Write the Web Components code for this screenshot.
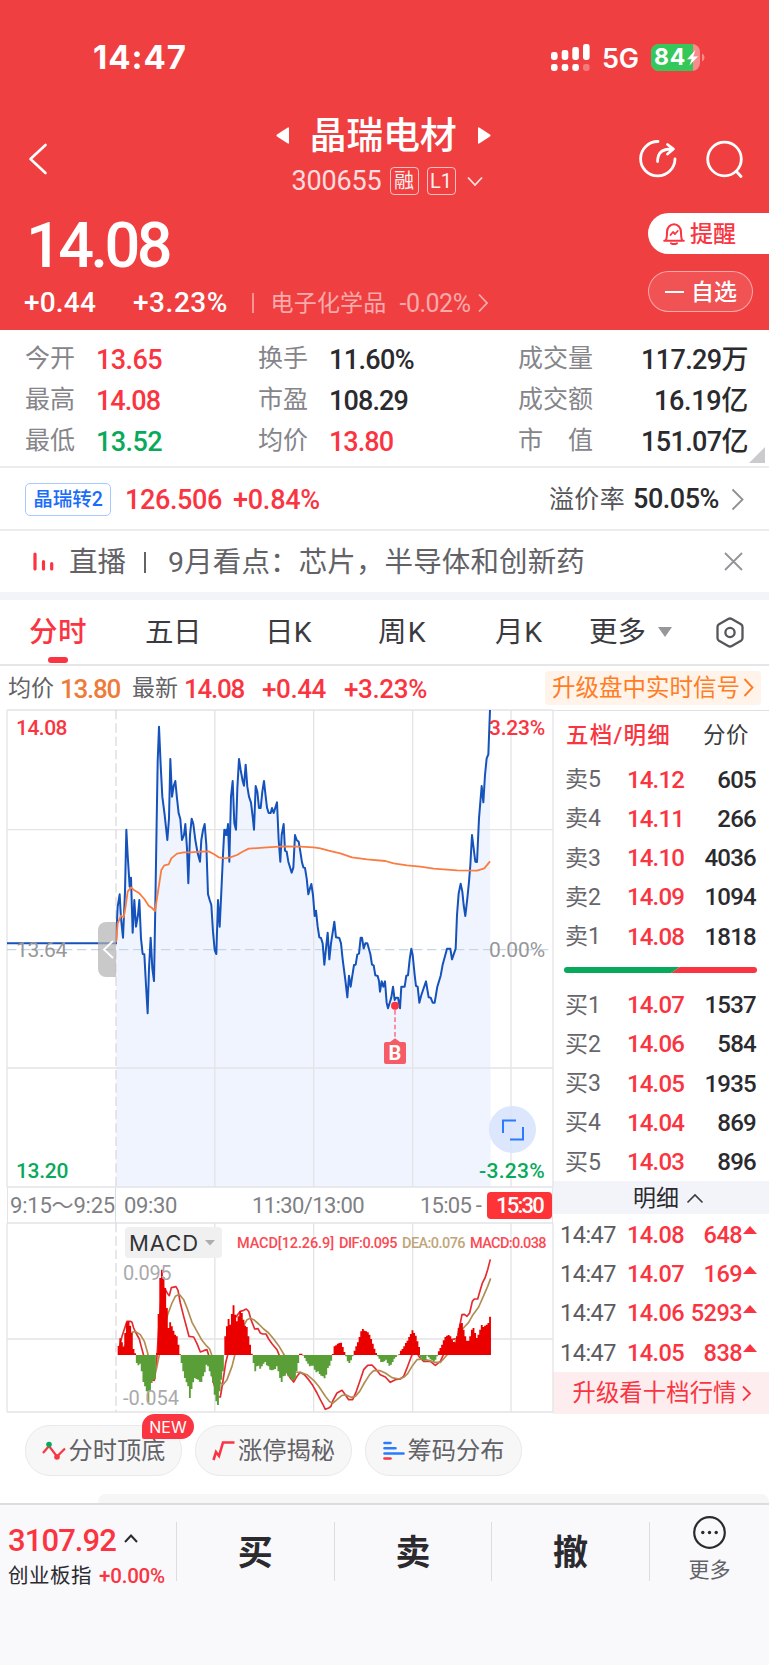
<!DOCTYPE html>
<html lang="zh-CN">
<head>
<meta charset="utf-8">
<meta name="viewport" content="width=device-width, initial-scale=1">
<title>晶瑞电材 300655</title>
<style>
	html, body {
		margin: 0;
		padding: 0;
	}
	body {
		width: 769px;
		height: 1665px;
		overflow: hidden;
		background: #fff;
		font-family: Roboto, "Noto Sans CJK SC", sans-serif;
		line-height: 1;
		color: #2b2b2f;
		--red: #fa3541;
		--green: #09a95c;
		--head: #f03f41;
		--line: #e6e6e8;
		--grey: #85858a;
	}
</style>
</head>
<body>
<stock-app></stock-app>

<script>
class BaseElement extends HTMLElement {
	constructor() {
		super();
		this.attachShadow({ mode: 'open' });
	}

	connectedCallback() {
		this.shadowRoot.innerHTML = `
			<style>
				* { box-sizing: border-box; }
				:host { display: flex; box-sizing: border-box; white-space: nowrap; }
				svg { display: block; flex: none; overflow: visible; }
				${this.css()}
			</style>
			${this.html()}
		`;
	}

	css() { return ''; }
	html() { return ''; }
}

// text that is tracked in or out until it fills the width in its "w" attribute
class FitText extends HTMLElement {
	constructor() {
		super();
		this.attachShadow({ mode: 'open' });
		this.shadowRoot.innerHTML = '<style>:host { display: block; flex: none; white-space: nowrap; } span { display: inline-block; vertical-align: top; }</style><span><slot></slot></span>';
	}

	connectedCallback() {
		const span = this.shadowRoot.querySelector('span');
		const width = Number(this.getAttribute('w'));
		if (!width) return;
		const count = this.textContent.length;
		const natural = span.getBoundingClientRect().width;
		span.style.letterSpacing = (width - natural) / count + 'px';
		this.style.width = width + 'px';
		this.style.boxSizing = 'content-box';
	}
}

class StatusBar extends BaseElement {
	css() {
		return `
			:host { height: 110px; padding: 5px 65px 0 93px; align-items: center; color: #fff; font-family: Inter, sans-serif; }
			.time { font-size: 33px; font-weight: 700; }
			.signal { margin-left: auto; }
			.net { font-size: 27px; font-weight: 600; margin: 1px 12px 0 12px; }
			.battery { position: relative; width: 53px; height: 27px; display: flex; align-items: center; }
			.battery svg { position: absolute; inset: 0; }
			.battery fit-text { position: relative; font-size: 23px; font-weight: 700; padding-left: 3px; }
		`;
	}
	html() {
		const bars = [[0, 8], [10.7, 10], [21.3, 13], [32, 16]].map(([x, h], i) => `
			<rect x="${x}" y="${16 - h}" width="6.6" height="${h}" rx="2.4"/>
			<rect x="${x}" y="20" width="6.6" height="7" rx="2.4" opacity="${i == 3 ? .3 : 1}"/>`).join('');
		return `
			<fit-text class="time" w="94">14:47</fit-text>
			<svg class="signal" width="39" height="27" fill="#fff">${bars}</svg>
			<fit-text class="net" w="37">5G</fit-text>
			<div class="battery">
				<svg width="53" height="27">
					<rect width="49" height="27" rx="8" fill="#f78c8d"/>
					<path d="M8 0H42V27H8A8 8 0 0 1 0 19V8A8 8 0 0 1 8 0Z" fill="#34c759"/>
					<path d="M51 9.5q2.5 1 2.5 4t-2.5 4z" fill="#f78c8d"/>
					<path d="M44.5 6L36 15.2h4.6L38.4 21.5L47 12.5h-4.8z" fill="#fff"/>
				</svg>
				<fit-text w="32">84</fit-text>
			</div>
		`;
	}
}

class StockTitle extends BaseElement {
	css() {
		return `
			:host { height: 95px; padding: 0 25px 0 29px; color: #fff; justify-content: space-between; }
			.back { margin-top: 34px; }
			.mid { display: flex; flex-direction: column; align-items: center; margin-left: 80px; }
			.name { display: flex; align-items: center; height: 50px; gap: 21px; font-size: 37px; font-weight: 500; }
			.name fit-text { margin-top: 2px; }
			.code { display: flex; align-items: center; height: 38px; margin-top: 2px; font-size: 27px; margin-left: 8px; }
			.code fit-text:first-child { opacity: .82; }
			.box { width: 29px; height: 28px; border: 1.5px solid rgba(255,255,255,.72); border-radius: 4px; font-size: 20px;
				display: flex; align-items: center; justify-content: center; margin-left: 8px; opacity: .92; }
			.code svg { margin-left: 11px; }
			.tools { display: flex; gap: 29px; margin-top: 30px; }
		`;
	}
	html() {
		return `
			<svg class="back" width="18" height="30" fill="none" stroke="#fff" stroke-width="2.6" stroke-linecap="round" stroke-linejoin="round"><path d="M16.5 1L1.5 15l15 14"/></svg>
			<div class="mid">
				<div class="name">
					<svg width="13" height="17" fill="#fff"><path d="M13 1.5v14q0 2-1.6 .8L1 9.6q-1.3-1.1 0-2.2L11.4 .7Q13-.5 13 1.5z"/></svg>
					<fit-text w="147">晶瑞电材</fit-text>
					<svg width="13" height="17" fill="#fff"><path d="M0 1.5v14q0 2 1.6 .8L12 9.6q1.3-1.1 0-2.2L1.6 .7Q0-.5 0 1.5z"/></svg>
				</div>
				<div class="code">
					<fit-text w="90">300655</fit-text>
					<span class="box">融</span><span class="box">L1</span>
					<svg width="16" height="9" fill="none" stroke="#fff" stroke-width="1.8" opacity=".85"><path d="M1 .5l7 7.5l7-7.5"/></svg>
				</div>
			</div>
			<div class="tools">
				<svg width="38" height="38" viewBox="0 0 38 38" fill="none" stroke="#fff" stroke-width="2.8" stroke-linecap="round" stroke-linejoin="round">
					<path d="M19 1.5A17.2 17.2 0 1 0 36 19"/><path d="M18.6 21.5c0-9 4.5-12.5 14-12.5M28.5 4.5l6 4.5l-6 5"/>
				</svg>
				<svg width="38" height="38" viewBox="0 0 38 38" fill="none" stroke="#fff" stroke-width="2.8" stroke-linecap="round"><circle cx="18.5" cy="19" r="16.8"/><path d="M30.5 31.5l4.5 5"/></svg>
			</div>
		`;
	}
}

class PricePanel extends BaseElement {
	css() {
		return `
			:host { height: 125px; color: #fff; justify-content: space-between; }
			.left { padding-left: 24px; }
			.price { font-size: 63px; font-weight: 500; height: 69px; padding: 9px 0 0 2px; }
			.change { display: flex; align-items: center; height: 40px; font-size: 28px; font-weight: 500; }
			.sep { width: 1.5px; height: 20px; background: rgba(255,255,255,.45); margin: 0 17px 0 24px; }
			.sector { color: rgba(255,255,255,.56); font-weight: 400; display: flex; align-items: center; font-size: 23px; }
			.right { display: flex; flex-direction: column; width: 121px; padding-top: 8px; gap: 17px; font-size: 23px; font-weight: 500; }
			.right fit-text { margin-top: 2px; }
			.remind, .fav { height: 41px; display: flex; align-items: center; }
			.remind { background: #fff; color: var(--red); border-radius: 21px 0 0 21px; padding-left: 15px; gap: 5px; }
			.fav { width: 105px; border: 1px solid rgba(255,255,255,.5); background: rgba(255,255,255,.1); border-radius: 21px; padding-left: 16px; gap: 7px; }
		`;
	}
	html() {
		return `
			<div class="left">
				<fit-text class="price" w="143">14.08</fit-text>
				<div class="change">
					<fit-text w="72">+0.44</fit-text>
					<fit-text w="95" style="margin-left:37px">+3.23%</fit-text>
					<span class="sep"></span>
					<div class="sector">
						<fit-text w="116">电子化学品</fit-text>
						<fit-text w="71" style="margin-left:13px;font-size:25px">-0.02%</fit-text>
						<svg width="10" height="18" style="margin-left:7px" fill="none" stroke="currentColor" stroke-width="1.8"><path d="M1 .5L9 9l-8 8.5"/></svg>
					</div>
				</div>
			</div>
			<div class="right">
				<div class="remind">
					<svg width="22" height="23" viewBox="0 0 22 23" fill="none" stroke="#fa3541" stroke-width="2" stroke-linejoin="round" stroke-linecap="round">
						<path d="M1.2 18.7h19.6M2.8 18.5c1.2-2.5 1.2-4 1.2-8.5a7 7.8 0 0 1 14 0c0 4.5 0 6 1.2 8.5M8 21.3q3 1.5 6 0"/><path d="M7.5 13l2.5-3l2 2l2.7-3" stroke-width="1.8"/>
					</svg>
					<fit-text w="46">提醒</fit-text>
				</div>
				<div class="fav">
					<svg width="19" height="2" fill="#fff"><rect width="19" height="2"/></svg>
					<fit-text w="46">自选</fit-text>
				</div>
			</div>
		`;
	}
}

class QuoteStats extends BaseElement {
	css() {
		return `
			:host { position: relative; height: 138px; padding: 8px 21px 0 25px; border-bottom: 2px solid #ececee; flex-direction: column; }
			.row { display: grid; grid-template-columns: 71px 162px 71px 189px 80px 1fr; height: 41px; align-items: center; font-size: 27px; font-weight: 500; }
			.row > * { margin-top: 3px; }
			i { font-style: normal; font-weight: 400; font-size: 25px; color: var(--grey); margin-top: 0 !important; white-space: pre; }
			.end { justify-self: end; }
			.red { color: var(--red); }
			.green { color: var(--green); }
			.corner { position: absolute; right: 4px; bottom: 3px; }
		`;
	}
	html() {
		return `
			<div class="row"><i>今开</i><fit-text class="red" w="66">13.65</fit-text><i>换手</i><fit-text w="85">11.60%</fit-text><i>成交量</i><fit-text class="end" w="107">117.29万</fit-text></div>
			<div class="row"><i>最高</i><fit-text class="red" w="64">14.08</fit-text><i>市盈</i><fit-text w="79">108.29</fit-text><i>成交额</i><fit-text class="end" w="94">16.19亿</fit-text></div>
			<div class="row"><i>最低</i><fit-text class="green" w="66">13.52</fit-text><i>均价</i><fit-text class="red" w="64">13.80</fit-text><i>市　值</i><fit-text class="end" w="107">151.07亿</fit-text></div>
			<svg class="corner" width="16" height="16" fill="#cbcbcd"><path d="M16 0v16H0z"/></svg>
		`;
	}
}

class BondRow extends BaseElement {
	css() {
		return `
			:host { height: 63px; padding: 1px 25px 0; border-bottom: 2px solid #ececee; align-items: center; font-size: 27px; font-weight: 500; color: var(--red); }
			.tag { width: 86px; height: 33px; border: 1.5px solid #a9c8ff; border-radius: 5px; color: #1a6dfb; font-size: 19.5px; display: flex; align-items: center; justify-content: center; margin-right: 14px; padding-top: 1px; }
			.label { color: #55555a; font-weight: 400; font-size: 25px; margin-left: auto; }
			.val { color: #2b2b2f; margin: 0 12px 0 8px; }
		`;
	}
	html() {
		return `
			<span class="tag">晶瑞转2</span>
			<fit-text w="97" style="margin-top:2px">126.506</fit-text>
			<fit-text w="87" style="margin:2px 0 0 11px">+0.84%</fit-text>
			<fit-text class="label" w="76">溢价率</fit-text>
			<fit-text class="val" w="86">50.05%</fit-text>
			<svg width="13" height="21" fill="none" stroke="#919196" stroke-width="1.9"><path d="M1.5 .5L11.5 10.5l-10 10"/></svg>
		`;
	}
}

class NewsRow extends BaseElement {
	css() {
		return `
			:host { height: 69px; padding: 0 27px 0 33px; border-bottom: 8px solid #f2f4f9; align-items: center; font-size: 28.5px; color: #626267; }
			fit-text { margin-top: 4px; }
			fit-text:last-of-type { margin-right: auto; }
			.bar { width: 2px; height: 21px; background: #626267; margin: 2px 22px 0 18px; overflow: hidden; color: transparent; }
		`;
	}
	html() {
		return `
			<svg width="21" height="19" style="margin-right:15px" fill="none" stroke="#fa3541" stroke-width="3.2" stroke-linecap="round"><path d="M2 2v15M10.5 9.5v7.5M18.7 11.5v5.5"/></svg>
			<fit-text w="57">直播</fit-text><span class="bar"></span><fit-text w="417">9月看点：芯片，半导体和创新药</fit-text>
			<svg width="17" height="17" fill="none" stroke="#939398" stroke-width="1.8"><path d="M0 0l17 17M17 0L0 17"/></svg>
		`;
	}
}

class PeriodTabs extends BaseElement {
	css() {
		return `
			:host { height: 66px; padding: 0 25px 0 29px; border-bottom: 2px solid var(--line); align-items: center; font-size: 28.5px; color: #3b3b3f; }
			fit-text { margin-top: 3px; }
			.on { position: relative; color: var(--red); font-weight: 500; }
			.on::after { content: ""; position: absolute; width: 20px; height: 6px; border-radius: 3px; background: var(--red); left: 19px; top: 38px; }
			.more { display: flex; align-items: center; gap: 12px; margin: 0 auto 0 46px; }
		`;
	}
	html() {
		return `
			<fit-text class="on" w="58">分时</fit-text>
			<fit-text w="56" style="margin-left:58px">五日</fit-text>
			<fit-text w="47" style="margin-left:64px">日K</fit-text>
			<fit-text w="49" style="margin-left:66px">周K</fit-text>
			<fit-text w="48" style="margin-left:68px">月K</fit-text>
			<span class="more"><fit-text w="57">更多</fit-text><svg width="14" height="10" fill="#97979a"><path d="M0 0h14L7 10z"/></svg></span>
			<svg width="28" height="31" viewBox="0 0 28 31" fill="none" stroke="#56565b" stroke-width="2.3" stroke-linejoin="round"><path d="M12.2 2q1.8-1 3.6 0L25 7.2q1.5 1 1.5 2.8v11q0 1.8-1.5 2.8L15.8 29q-1.8 1-3.6 0L3 23.8Q1.5 22.8 1.5 21V10q0-1.8 1.5-2.8z"/><circle cx="14" cy="15.5" r="4.6"/></svg>
		`;
	}
}

class AverageRow extends BaseElement {
	css() {
		return `
			:host { height: 43px; padding: 0 8px 0 8px; align-items: center; font-size: 26px; font-weight: 500; color: var(--red); }
			.l { font-size: 23px; font-weight: 400; color: #626267; margin-top: 1px; }
			.up { margin-left: auto; width: 216px; height: 34px; border-radius: 4px; background: #fff3ea; color: #ff7d24; font-size: 23.5px; font-weight: 400;
				display: flex; align-items: center; justify-content: center; gap: 3px; }
			.up fit-text { margin-top: 2px; }
		`;
	}
	html() {
		return `
			<fit-text class="l" w="46">均价</fit-text>
			<fit-text w="60" style="margin:2px 0 0 6px;color:#ee7b3a">13.80</fit-text>
			<fit-text class="l" w="46" style="margin-left:12px">最新</fit-text>
			<fit-text w="60" style="margin:2px 0 0 6px">14.08</fit-text>
			<fit-text w="64" style="margin:2px 0 0 18px">+0.44</fit-text>
			<fit-text w="83" style="margin:2px 0 0 18px">+3.23%</fit-text>
			<span class="up"><fit-text w="188">升级盘中实时信号</fit-text><svg width="11" height="19" fill="none" stroke="#ff7d24" stroke-width="1.9"><path d="M1.5 1l8 8.5l-8 8.5"/></svg></span>
		`;
	}
}

// price and average curves, in thirds of a pixel
const PRICE = `20,715 347,715 352,605 358,568 362,640 368,698 374,560 378,374 382,450 388,545 392,518 397,683 402,585 407,665 413,630 417,585 422,700 427,747 432,748 437,840 442,925 446,790 451,698 456,790 461,828
	465,600 469,350 472,170 476,65 481,180 486,275 493,330 501,405 506,340 510,162 515,275 520,243 525,228 530,280 535,325 540,342 545,405 551,390 555,357 560,430 564,535 569,390 574,341 579,357 585,405
	592,445 599,470 603,405 608,375 613,357 618,420 623,568 628,585 633,600 638,680 643,735 648,747 653,585 658,665 663,560 668,450 672,374 675,390 678,374 680,390 683,357 687,470 692,275 697,228 702,355
	707,374 711,250 716,162 721,195 727,228 731,242 736,179 741,245 746,275 752,293 757,335 761,374 766,243 771,260 776,309 781,309 786,260 791,228 795,265 800,308 805,324 811,324 815,309 820,324 830,292
	835,405 840,470 844,390 850,357 854,437 859,440 864,470 874,503 879,488 884,390 889,405 895,410 900,440 905,472 909,487 914,489 919,520 924,568 929,550 933,537 938,570 943,633 947,617 952,665 957,697
	962,699 967,715 972,779 977,730 982,683 987,763 992,715 1002,650 1007,697 1017,699 1022,715 1027,763 1035,825 1041,877 1046,812 1051,845 1056,812 1061,780 1066,779 1071,748 1076,746 1081,698 1085,698
	1090,730 1095,715 1101,715 1110,747 1115,779 1120,781 1125,811 1132,813 1136,828 1139,860 1144,829 1149,845 1154,829 1159,893 1163,910 1169,890 1173,877 1178,845 1183,885 1187,878 1193,878 1199,910
	1203,845 1213,845 1218,812 1223,811 1228,763 1233,731 1237,750 1243,810 1247,843 1252,845 1257,893 1263,870 1277,829 1285,877 1291,878 1297,893 1303,893 1311,845 1321,812 1327,779 1340,731 1350,731
	1355,763 1366,731 1370,630 1375,565 1381,536 1386,560 1390,600 1395,633 1401,580 1406,530 1410,480 1415,390 1420,430 1425,470 1430,471 1436,340 1444,243 1449,292 1454,210 1459,160 1464,148 1469,15`;
const AVERAGE = `347,712 352,655 362,632 370,637 375,610 382,560 392,547 402,556 417,565 432,582 445,602 455,609 464,618 473,560 483,495 492,481 505,478 513,460 530,446 550,442 570,442 600,440 625,439 640,447
	655,457 675,460 690,457 710,450 725,441 745,431 800,427 850,424 900,425 940,427 960,430 985,437 1020,445 1055,457 1100,463 1155,468 1180,475 1220,481 1260,485 1300,491 1370,496 1430,497 1452,490 1469,469`;

class TrendChart extends BaseElement {
	css() {
		return `
			:host { position: relative; height: 477px; margin-left: 7px; width: 546px; font-size: 21px; font-weight: 500; }
			.lab { position: absolute; }
			.fold { position: absolute; left: 91px; top: 212px; width: 18px; height: 55px; border-radius: 8px 0 0 8px; background: rgba(178,178,178,.7); display: flex; align-items: center; justify-content: center; }
			.zoom { position: absolute; left: 482px; top: 396px; width: 47px; height: 47px; border-radius: 50%; background: rgba(214,227,253,.85); display: flex; align-items: center; justify-content: center; }
			.mark { position: absolute; left: 377px; top: 332px; width: 22px; height: 22px; border-radius: 2px; background: #f65c66; color: #fff; font: 700 20px/22px Roboto, sans-serif; text-align: center; }
		`;
	}
	html() {
		return `
			<svg width="546" height="477" viewBox="20 15 1638 1431" fill="none" stroke-linejoin="round">
				<path d="${'M347,715 L' + PRICE.replace('20,715 ', '') + ' 1471,1446 347,1446Z'}" fill="#eff4fe"/>
				<path d="M20 15H1658M20 374H1658M20 1089H1658M20 1446H1658M20 15V1446M1658 15V1446M643.5 15V1446M940 15V1446M1237 15V1446M1532 15V1446" stroke="#e4e4e7" stroke-width="4"/>
				<path d="M347 15V1446" stroke="#dcdce0" stroke-width="4" stroke-dasharray="28 12"/>
				<path d="M20 734H1650" stroke="#c5d6e4" stroke-width="4" stroke-dasharray="28 14"/>
				<polyline points="${PRICE}" stroke="#1552bb" stroke-width="6"/>
				<polyline points="${AVERAGE}" stroke="#fb7c41" stroke-width="5.4"/>
				<path d="M1184 915V1000" stroke="#f8626c" stroke-width="4" stroke-dasharray="14 8"/>
				<circle cx="1184" cy="902" r="12" fill="#fa3541"/>
				<path d="M1168 1012l16-12l16 12z" fill="#f65c66"/>
			</svg>
			<span class="mark">B</span>
			<fit-text class="lab" w="51" style="left:9px;top:8px;color:var(--red)">14.08</fit-text>
			<fit-text class="lab" w="56" style="right:8px;top:8px;color:var(--red)">3.23%</fit-text>
			<fit-text class="lab" w="51" style="left:9px;top:230px;color:#97979a;font-weight:400">13.64</fit-text>
			<fit-text class="lab" w="56" style="right:8px;top:230px;color:#97979a;font-weight:400">0.00%</fit-text>
			<fit-text class="lab" w="52" style="left:9px;top:451px;color:var(--green)">13.20</fit-text>
			<fit-text class="lab" w="66" style="right:8px;top:451px;color:var(--green)">-3.23%</fit-text>
			<span class="fold"><svg width="11" height="17" style="margin-left:2px" fill="none" stroke="#fff" stroke-width="1.8"><path d="M10 0L1 8.5l9 8.5"/></svg></span>
			<span class="zoom"><svg width="22" height="22" fill="none" stroke="#2a7bfd" stroke-width="2"><path d="M1 14V1.5H14M21 8V20.5H8"/></svg></span>
		`;
	}
}

class TimeAxis extends BaseElement {
	css() {
		return `
			:host { height: 36px; margin-left: 7px; width: 546px; align-items: center; border: solid #e4e4e7; border-width: 0 1px; font-size: 22px; color: #808084; padding-left: 2px; }
			fit-text { margin-top: 2px; }
			b { background: #fd3338; color: #fff; width: 65px; height: 27px; border-radius: 4px; font-weight: 500; display: flex; align-items: center; justify-content: center; margin-left: auto; }
			i { width: 1px; height: 36px; background: #dcdce0; }
		`;
	}
	html() {
		return `
			<fit-text w="105">9:15～9:25</fit-text><i></i>
			<fit-text w="53" style="margin-left:8px">09:30</fit-text>
			<fit-text w="112" style="margin-left:75px">11:30/13:00</fit-text>
			<fit-text w="61" style="margin-left:56px">15:05 -</fit-text>
			<b><fit-text w="47">15:30</fit-text></b>
		`;
	}
}

// MACD bars: [x of the first bar, bar ends], one bar per minute
const BARS = [
	[352, [379, 356, 368, 382, 340, 308, 305, 318, 340, 388, 401, 430, 437, 432, 455, 487, 500, 515, 548, 515, 490, 480, 478]],
	[467, [400, 283, 175, 150, 172, 205, 265, 325, 308, 320, 333, 345, 350, 375, 404]],
	[541, [430, 455, 475, 488, 500, 535, 508, 488, 475, 478, 480, 486, 487, 470, 458, 435, 440, 455, 470, 490, 525, 545, 556, 515, 480, 455]],
	[672, [350, 320, 298, 315, 283, 257, 285, 305, 290, 275, 280, 300, 318, 322, 350, 375, 402]],
	[757, [430, 455, 440, 438, 447, 440, 432, 427, 437, 440, 450, 452, 450, 448, 440, 455, 475, 487, 470, 468, 460, 470, 472, 480, 482, 478, 455, 430, 402, 402, 408, 415, 425, 432, 440, 438, 438, 450, 458, 455, 463]],
	[960, [468, 470, 476, 465, 445, 438, 423, 403, 380, 377, 372, 370, 369, 382, 397, 410, 425, 430, 422, 410]],
	[1060, [393, 380, 368, 352, 335, 328, 333, 335, 338, 345, 358, 372, 387, 400, 410, 417, 427, 427, 425, 420, 430, 438, 435, 427, 417, 412, 407, 404, 393, 388, 380, 370, 363, 352, 343, 332, 340, 348, 365, 382]],
	[1258, [412, 420, 424, 422, 408, 413, 419, 422, 424, 420, 410, 395, 385, 375, 362, 352, 348, 346, 350, 360, 367, 368, 350, 325, 312, 310, 330, 350, 363, 363, 350, 330, 325, 340, 355, 345, 330, 316, 322, 318, 315, 310, 291]]
];
const DIF = `355,390 365,350 380,305 390,305 395,308 400,325 407,340 417,358 422,378 428,400 440,450 450,480 462,482 468,440 475,330 485,200 495,210 502,222 507,228 513,204 527,201 533,212 540,250 550,290 558,320 566,350
	580,352 590,372 600,397 610,393 620,390 626,410 640,490 652,532 660,532 667,490 676,430 686,390 700,300 720,275 730,272 738,268 745,275 752,300 758,315 763,328 773,327 780,340 787,343 797,343 805,358 815,372
	830,390 838,410 855,450 870,475 880,487 890,470 900,458 912,465 925,480 937,497 950,520 960,540 968,555 975,569 985,565 992,560 998,542 1010,520 1025,512 1035,525 1045,540 1057,540 1068,515 1080,480 1090,450
	1102,437 1115,436 1128,450 1140,465 1155,472 1170,488 1185,480 1200,478 1210,470 1222,440 1235,405 1250,400 1257,412 1270,425 1290,425 1305,437 1320,425 1328,408 1340,385 1352,360 1370,357 1378,320 1385,285
	1392,284 1400,290 1408,280 1416,245 1422,238 1432,238 1440,210 1447,188 1454,175 1462,150 1470,119`;
const DEA = `355,398 380,370 395,338 405,335 420,345 432,365 442,400 450,440 460,455 468,450 478,400 490,330 502,285 515,250 525,230 537,224 550,240 562,270 575,308 590,335 605,362 618,378 628,388 635,408 645,450
	660,490 668,495 680,480 695,440 705,400 718,350 732,315 740,300 750,296 760,300 775,313 790,328 805,340 820,358 835,378 850,403 870,440 882,457 900,458 920,465 940,482 955,500 975,530 988,546 998,550
	1010,540 1025,527 1038,526 1052,533 1065,530 1078,515 1092,490 1108,465 1120,453 1140,453 1155,460 1175,474 1195,478 1210,473 1222,462 1235,440 1250,420 1265,418 1285,422 1305,428 1320,428 1332,415 1345,400
	1360,375 1380,335 1392,322 1405,308 1418,285 1435,262 1450,228 1462,200 1471,176`;

class MacdChart extends BaseElement {
	css() {
		return `
			:host { position: relative; height: 189px; margin-left: 7px; width: 546px; }
			.lab { position: absolute; color: #aaaaad; font-size: 20px; left: 116px; }
			.name { position: absolute; left: 118px; top: 4px; width: 97px; height: 31px; border-radius: 4px; background: #f0f0f1; display: flex; align-items: center; gap: 6px; padding-left: 4px; font: 400 22px/1 Inter, sans-serif; color: #333337; }
			.legend { position: absolute; left: 230px; top: 14px; display: flex; font-size: 14.5px; font-weight: 500; color: #fb4a54; }
			.legend fit-text + fit-text { margin-left: 5px; }
		`;
	}
	bars(up) {
		let d = '';
		for (const [start, ends] of BARS) {
			ends.forEach((y, i) => {
				if ((y < 405) == up) d += `M${(start + i * 4.96).toFixed(1)} 406h5.6V${y}h-5.6z`;
			});
		}
		return d;
	}
	html() {
		return `
			<svg width="546" height="189" viewBox="20 10 1638 567" fill="none" stroke-linejoin="round">
				<path d="M20 10H1658M20 358H1658M20 577H1658M20 10V577M1658 10V577M643.5 10V577M940 10V577M1237 10V577M1532 10V577" stroke="#e4e4e7" stroke-width="4"/>
				<path d="M347 10V577" stroke="#dcdce0" stroke-width="4" stroke-dasharray="28 12"/>
				<polyline points="${DIF}" stroke="#e42b31" stroke-width="5"/>
				<polyline points="${DEA}" stroke="#b08d51" stroke-width="5"/>
				<path d="${this.bars(true)}" fill="#eb0000"/>
				<path d="${this.bars(false)}" fill="#5a9e38"/>
			</svg>
			<span class="name"><fit-text w="70">MACD</fit-text><svg width="10" height="6" fill="#adadb0"><path d="M0 0h10L5 5.5z"/></svg></span>
			<fit-text class="lab" w="48" style="top:40px">0.095</fit-text>
			<fit-text class="lab" w="56" style="top:165px">-0.054</fit-text>
			<div class="legend">
				<fit-text w="97">MACD[12.26.9]</fit-text><fit-text w="58">DIF:0.095</fit-text><fit-text w="63" style="color:#bfa67a">DEA:0.076</fit-text><fit-text w="76">MACD:0.038</fit-text>
			</div>
		`;
	}
}

class OrderBook extends BaseElement {
	css() {
		return `
			:host { flex-direction: column; flex: 1; font-size: 24px; border-top: 1.5px solid #e0e0e3; }
			.head { display: flex; justify-content: space-between; align-items: center; height: 49px; padding: 0 20px 0 13px; font-size: 22.5px; color: #3b3b3f; }
			.row { display: flex; align-items: center; height: 39.3px; padding: 0 13px 0 12px; font-weight: 500; }
			.row i { width: 62px; font-style: normal; font-weight: 400; color: #66666b; font-size: 23px; }
			.row .vol { margin-left: auto; }
			.red { color: var(--red); }
			.ratio { margin: 11px 12px 12px 11px; }
			.mid { height: 33px; margin-top: -1px; background: #f2f4f9; display: flex; align-items: center; justify-content: center; gap: 8px; font-size: 23px; color: #2b2b2f; padding: 2px 0 0 14px; }
			.deal { color: var(--red); padding: 4px 12px 0 7px; font-size: 23.5px; }
			.deal i { width: 67px; font-size: 23.5px; color: #5c5c60; }
			.deal svg { margin: -10px 0 0 1px; }
			.up { height: 42px; margin-top: 1px; background: #feedef; color: var(--red); display: flex; align-items: center; justify-content: center; gap: 5px; font-size: 23.3px; padding: 1px 0 0 1px; }
		`;
	}
	level([label, price, vol]) {
		return `<div class="row"><i>${label}</i><fit-text class="red" w="57">${price}</fit-text><fit-text class="vol" w="${vol.length * 12.9}">${vol}</fit-text></div>`;
	}
	html() {
		const asks = [['卖5', '14.12', '605'], ['卖4', '14.11', '266'], ['卖3', '14.10', '4036'], ['卖2', '14.09', '1094'], ['卖1', '14.08', '1818']];
		const bids = [['买1', '14.07', '1537'], ['买2', '14.06', '584'], ['买3', '14.05', '1935'], ['买4', '14.04', '869'], ['买5', '14.03', '896']];
		const deals = [['14.08', '648'], ['14.07', '169'], ['14.06', '5293'], ['14.05', '838']];
		return `
			<div class="head"><fit-text class="red" w="105" style="font-weight:500">五档/明细</fit-text><fit-text w="46">分价</fit-text></div>
			${asks.map(this.level).join('')}
			<svg class="ratio" width="193" height="6"><path d="M3 0H116L107 6H3A3 3 0 0 1 3 0z" fill="#09a95c"/><path d="M116 0H190A3 3 0 0 1 190 6H107z" fill="#fa3541"/></svg>
			${bids.map(this.level).join('')}
			<div class="mid"><fit-text w="46">明细</fit-text><svg width="16" height="9" fill="none" stroke="#3b3b3f" stroke-width="1.6"><path d="M.5 8.5L8 1l7.5 7.5"/></svg></div>
			${deals.map(([price, vol]) => `<div class="row deal"><i><fit-text w="56">14:47</fit-text></i><fit-text w="57">${price}</fit-text><fit-text class="vol" w="${vol.length * 12.8}">${vol}</fit-text><svg width="14" height="8" fill="#fa3541"><path d="M0 8L7 0l7 8z"/></svg></div>`).join('')}
			<div class="up"><fit-text w="164">升级看十档行情</fit-text><svg width="9" height="15" fill="none" stroke="#fa3541" stroke-width="1.8"><path d="M1 .5l7 7l-7 7"/></svg></div>
		`;
	}
}

class ToolChip extends BaseElement {
	css() {
		return `
			:host { position: relative; width: 157px; height: 51px; border: 1.5px solid #e9e9eb; border-radius: 25px; background: #f7f7f8; align-items: center; justify-content: center; gap: 3px; font-size: 24.2px; color: #626267; }
			b { position: absolute; right: -13px; top: -12px; width: 52px; height: 25px; border-radius: 13px 13px 13px 2px; background: var(--red); color: #fff; font: 400 16px/26px Inter, sans-serif; text-align: center; }
			span { padding-top: 2px; }
		`;
	}
	html() {
		const badge = this.getAttribute('badge');
		return `<slot name="icon"></slot><span><slot></slot></span>${badge ? `<b>${badge}</b>` : ''}`;
	}
}

class ToolChips extends BaseElement {
	css() {
		return `:host { height: 80px; padding: 11px 0 0 25px; gap: 13px; }`;
	}
	html() {
		return `
			<tool-chip badge="NEW"><svg slot="icon" width="24" height="20" fill="none" stroke="#fa3541" stroke-width="2.2"><path d="M1 12l6-7l8 10.5l8-8"/><circle cx="7" cy="3.5" r="2.8" fill="#09a95c" stroke="none"/><circle cx="15" cy="16" r="2.8" fill="#fa3541" stroke="none"/></svg>分时顶底</tool-chip>
			<tool-chip><svg slot="icon" width="23" height="20" fill="none" stroke="#fa3541" stroke-width="2.6"><path d="M1.5 19l2.5-8l3 4l4-13.5h11.5"/></svg>涨停揭秘</tool-chip>
			<tool-chip><svg slot="icon" width="22" height="19" fill="none" stroke="#2a7bfd" stroke-width="2.6" stroke-linecap="round"><path d="M1.5 2h6M1.5 7.3h11M1.5 12.5h19"/><path d="M1.5 17.5h6" stroke="#fa3541"/></svg>筹码分布</tool-chip>
		`;
	}
}

class TradeBar extends BaseElement {
	css() {
		return `
			:host { height: 162px; border-top: 2px solid #dcdce0; background: #f9f9fc; }
			.index { width: 176px; flex: none; padding: 18px 0 0 8px; color: var(--red); font-weight: 500; }
			.top { display: flex; align-items: center; height: 34px; font-size: 31px; gap: 8px; }
			.top svg { margin-top: -4px; }
			.sub { display: flex; align-items: center; height: 34px; font-size: 20.5px; gap: 7px; margin-top: 2px; }
			.act { width: 157.6px; height: 59px; margin-top: 17px; padding-top: 3px; border-left: 1.5px solid #dddde1; font-size: 35px; font-weight: 700; display: flex; align-items: center; justify-content: center; }
			.more { border-left: 1.5px solid #dddde1; margin-top: 17px; height: 59px; flex: 1; display: flex; flex-direction: column; align-items: center; gap: 11px; font-size: 21px; color: #626267; }
			.more svg { margin-top: -6px; }
		`;
	}
	html() {
		return `
			<div class="index">
				<div class="top"><fit-text w="108">3107.92</fit-text><svg width="14" height="9" fill="none" stroke="#2b2b2f" stroke-width="2"><path d="M1 8l6-6.5l6 6.5"/></svg></div>
				<div class="sub"><fit-text w="84" style="color:#2b2b2f;font-weight:400">创业板指</fit-text><fit-text w="66">+0.00%</fit-text></div>
			</div>
			<span class="act">买</span><span class="act">卖</span><span class="act">撤</span>
			<div class="more">
				<svg width="33" height="33"><circle cx="16.5" cy="16.5" r="15.3" fill="none" stroke="#2b2b2f" stroke-width="2.2"/><g fill="#2b2b2f"><circle cx="9.8" cy="16.5" r="1.7"/><circle cx="16.5" cy="16.5" r="1.7"/><circle cx="23.2" cy="16.5" r="1.7"/></g></svg>
				<span>更多</span>
			</div>
		`;
	}
}

class StockApp extends BaseElement {
	css() {
		return `
			:host { flex-direction: column; width: 769px; }
			header { background: var(--head); height: 330px; }
			.board { display: flex; height: 704px; margin-top: 1px; }
			.charts { display: flex; flex-direction: column; width: 553px; }
			.peek { height: 9px; margin-left: 98px; background: #f6f6f7; border-radius: 8px 8px 0 0; }
		`;
	}
	html() {
		return `
			<header><status-bar></status-bar><stock-title></stock-title><price-panel></price-panel></header>
			<quote-stats></quote-stats>
			<bond-row></bond-row>
			<news-row></news-row>
			<period-tabs></period-tabs>
			<average-row></average-row>
			<div class="board">
				<div class="charts"><trend-chart></trend-chart><time-axis></time-axis><macd-chart></macd-chart></div>
				<order-book></order-book>
			</div>
			<tool-chips></tool-chips>
			<div class="peek"></div>
			<trade-bar></trade-bar>
		`;
	}
}

customElements.define('fit-text', FitText);
customElements.define('status-bar', StatusBar);
customElements.define('stock-title', StockTitle);
customElements.define('price-panel', PricePanel);
customElements.define('quote-stats', QuoteStats);
customElements.define('bond-row', BondRow);
customElements.define('news-row', NewsRow);
customElements.define('period-tabs', PeriodTabs);
customElements.define('average-row', AverageRow);
customElements.define('trend-chart', TrendChart);
customElements.define('time-axis', TimeAxis);
customElements.define('macd-chart', MacdChart);
customElements.define('order-book', OrderBook);
customElements.define('tool-chip', ToolChip);
customElements.define('tool-chips', ToolChips);
customElements.define('trade-bar', TradeBar);
customElements.define('stock-app', StockApp);
</script>
</body>
</html>
